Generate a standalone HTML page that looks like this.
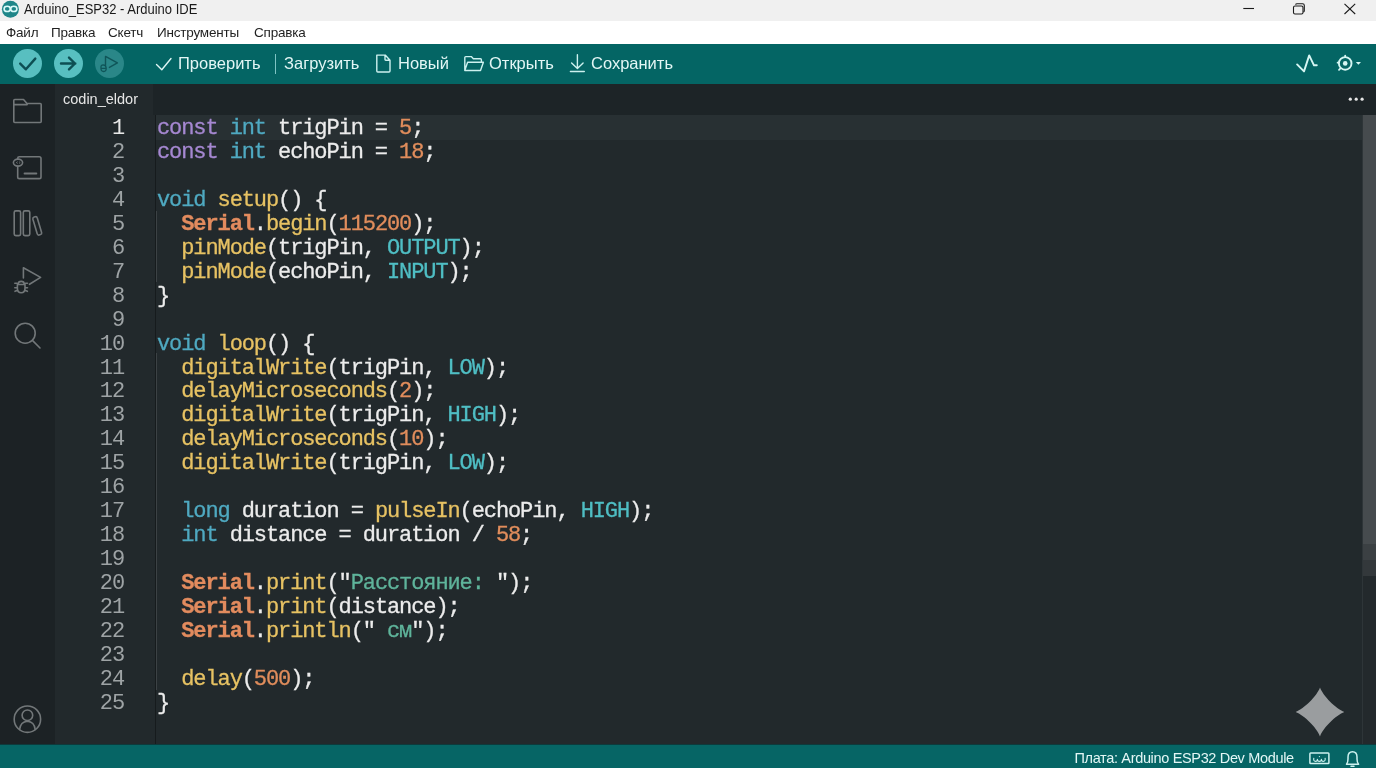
<!DOCTYPE html>
<html><head><meta charset="utf-8">
<style>
*{margin:0;padding:0;box-sizing:border-box}
html,body{width:1376px;height:768px;overflow:hidden;background:#22292c;font-family:"Liberation Sans",sans-serif}
body>div,body>svg{will-change:transform}
.abs{position:absolute}
#title{left:0;top:0;width:1376px;height:21px;background:#f0f0f0}
#title .t{left:23.5px;top:0.8px;font-size:14px;transform:scaleX(0.928);transform-origin:0 0;color:#1a1a1a;white-space:nowrap}
#menu{left:0;top:21px;width:1376px;height:23px;background:#ffffff}
#menu span{position:absolute;top:4px;font-size:13.5px;letter-spacing:-0.2px;color:#1f1f1f;white-space:nowrap}
#tool{left:0;top:44px;width:1376px;height:40px;background:#046564}
.circ{position:absolute;width:29px;height:29px;border-radius:50%;background:#58bfc0;top:5px}
.tb{position:absolute;top:10px;font-size:16.5px;color:#e3f6f5;white-space:nowrap}
#side{left:0;top:84px;width:55px;height:660px;background:#1c2225}
#tabbar{left:55px;top:84px;width:1321px;height:31px;background:#1d2427}
#tab{left:55px;top:84px;width:98px;height:31px;background:#22292c}
#tab span{position:absolute;left:8px;top:6.5px;font-size:14.5px;color:#e6e6e6}
#editor{left:55px;top:115px;width:1321px;height:629px;background:#22292c}
#gutline{left:155px;top:115px;width:1px;height:629px;background:#161b1d}
#hl{left:156px;top:115px;width:1206px;height:25px;background:#283033}
#scroll{left:1362px;top:115px;width:14px;height:629px;background:#23292c;border-left:1px solid #2e3538}
#thumb{left:1363px;top:115px;width:13px;height:429px;background:#464b4e}
#status{left:0;top:744px;width:1376px;height:24px;background:#066565;border-top:1px solid #0d3a3c}
.code{position:absolute;left:156.5px;top:117px;font-family:"Liberation Mono",monospace;font-size:22px;letter-spacing:-1.1px;line-height:23.95px;color:#ececec;-webkit-text-stroke:0.3px currentColor;white-space:pre}
.nums{position:absolute;left:60px;width:64px;top:117px;font-family:"Liberation Mono",monospace;font-size:22px;letter-spacing:-1.1px;line-height:23.95px;color:#9ea3a5;text-align:right;white-space:pre}
.k{color:#a688d2}.ty{color:#4fa9c1}.f{color:#e7c263}.n{color:#e18d5c}.s{color:#e28b5e;font-weight:bold}.c{color:#4fbec4}.st{color:#5fb49b}
</style></head><body>
<div id="title" class="abs">
  <svg class="abs" style="left:0;top:0" width="22" height="20" viewBox="0 0 22 20"><circle cx="10.4" cy="9.15" r="8.5" fill="#1f8689"/><g fill="none" stroke="#dcfbfa" stroke-width="1.6"><ellipse cx="7.2" cy="8.9" rx="3.1" ry="2.6"/><ellipse cx="13.8" cy="8.9" rx="3.1" ry="2.6"/></g></svg>
  <div class="abs t">Arduino_ESP32 - Arduino IDE</div>
  <svg class="abs" style="left:1230px;top:0" width="146" height="20" viewBox="1230 0 146 20" fill="none" stroke="#1a1a1a" stroke-width="1.1">
    <path d="M1243.3 8.5H1254"/>
    <rect x="1293.5" y="6" width="9.5" height="8" rx="1.5"/>
    <path d="M1295.5 4.6Q1295.8 3.8 1297 3.8H1302.6Q1304.3 3.8 1304.3 5.5V10.8Q1304.3 11.8 1303.3 12"/>
    <path d="M1344.5 3.8L1355.2 14M1355.2 3.8L1344.5 14"/>
  </svg>
</div>
<div id="menu" class="abs">
  <span style="left:6px">Файл</span><span style="left:51px">Правка</span><span style="left:108px">Скетч</span><span style="left:157px">Инструменты</span><span style="left:254px">Справка</span>
</div>
<div id="tool" class="abs">
  <div class="circ" style="left:13px"></div>
  <div class="circ" style="left:54px"></div>
  <div class="circ" style="left:95px;background:#2a8788"></div>
  <svg class="abs" style="left:0;top:0" width="1376" height="40" viewBox="0 44 1376 40" fill="none" stroke-linecap="round" stroke-linejoin="round">
    <path d="M20.2 63.6L25.9 69.3L35.3 58.6" stroke="#0d4f53" stroke-width="2.4"/>
    <path d="M61 63.5H75.3M69 57.6L75 63.5L69 69.4" stroke="#0d4f53" stroke-width="2.4"/>
    <path d="M105.5 65.4V56.4L117.4 62.9L109.4 67.4" stroke="#0f5558" stroke-width="1.4"/>
    <path d="M101 68.2Q100.6 64.9 103.2 64.9Q105.8 65 106.2 68Q106.4 71.4 103.6 71.5Q100.9 71.5 101 68.2Z M101.2 68.3H106" stroke="#0f5558" stroke-width="1.3"/>
    <path d="M156.5 64.5L161.8 69.8L171 58.5" stroke="#dff5f4" stroke-width="1.4"/>
    <path d="M376.8 55.1H385.2L390 60.2V71Q390 72 389 72H377.8Q376.8 72 376.8 71Z M385 55.3V59.6Q385 60.3 385.7 60.3H389.8" stroke="#cdf1ef" stroke-width="1.4"/>
    <path d="M464.8 70.5V57.6Q464.8 56.6 465.8 56.6H471.3L473.3 58.7H480.4Q481.4 58.7 481.4 59.7V62.2 M464.8 70.5L467.6 62.3H483.4L480.5 70.5Z" stroke="#cdf1ef" stroke-width="1.4"/>
    <path d="M577.4 54.8V68.4M571.6 63L577.4 68.6L583.1 63M570.4 71.5H584.3" stroke="#cdf1ef" stroke-width="1.4"/>
    <path d="M1297.1 64.4L1304 71.4L1309.2 55.4L1314 65.3H1316.8" stroke="#d6f6f3" stroke-width="1.9"/>
    <circle cx="1345.2" cy="63.4" r="6.3" stroke="#d6f6f3" stroke-width="1.9"/>
    <circle cx="1345.2" cy="63.4" r="2.3" fill="#d6f6f3"/>
    <path d="M1345.2 55.6V56.8M1337.6 62.7H1338.6M1339 69.8L1340.2 68.6" stroke="#d6f6f3" stroke-width="1.8"/>
    <path d="M1355.8 62H1361L1358.4 64.7Z" fill="#d6f6f3" stroke="none"/>
  </svg>
  <div class="tb" style="left:178px">Проверить</div>
  <div class="abs" style="left:275px;top:10px;width:1px;height:20px;background:#7fc4c4"></div>
  <div class="tb" style="left:284px">Загрузить</div>
  <div class="tb" style="left:398px">Новый</div>
  <div class="tb" style="left:489px">Открыть</div>
  <div class="tb" style="left:591px">Сохранить</div>
</div>
<div id="side" class="abs"></div>
<svg class="abs" style="left:0;top:84px" width="55" height="660" viewBox="0 84 55 660" fill="none" stroke="#727779" stroke-width="1.6" stroke-linejoin="round" stroke-linecap="round">
  <path d="M13.8 121.5V100.5Q13.8 99.5 14.8 99.5H23.5L27 103.5H40.2Q41.2 103.5 41.2 104.5V121.5Q41.2 122.5 40.2 122.5H14.8Q13.8 122.5 13.8 121.5Z M13.8 104.6H27.2"/>
  <path d="M17.7 158.9V158.3Q17.7 156.7 19.3 156.7H39.3Q41 156.7 41 158.4V176.9Q41 178.6 39.3 178.6H19.4Q17.7 178.6 17.7 176.9V166.2"/>
  <ellipse cx="18" cy="162.6" rx="4.6" ry="3.5"/>
  <path d="M24.5 173.5H36.4" stroke-width="1.8"/>
  <path d="M16.6 162.6L17.4 161.9M16.6 162.6L17.4 163.3M19.4 161.9L20.2 162.6L19.4 163.3" stroke-width="0.8"/>
  <rect x="14.2" y="210.9" width="6.4" height="24.7" rx="1.6"/>
  <rect x="23.3" y="210.9" width="6.5" height="24.7" rx="1.6"/>
  <path d="M32.9 219.2Q32.5 217.6 34.1 217.1L35.3 216.7Q36.8 216.3 37.2 217.8L41.6 232.6Q42 234.1 40.5 234.6L39.2 235Q37.7 235.4 37.3 233.9Z"/>
  <path d="M23.4 278V267.8L40.6 277.4L29.5 284.3"/>
  <path d="M18.2 283.8Q18.3 281.4 21.2 281.4Q24.1 281.4 24.2 283.8 M17.4 284.5H25V288.2Q25 292.6 21.2 292.8Q17.4 292.6 17.4 288.2Z M14.8 283.3H16.8M14.8 287.8H16.8M15 291.3L16.9 290.5M25.5 283.3H27.5M25.5 287.8H27.5M25.5 290.5L27.4 291.3"/>
  <circle cx="25.2" cy="333.2" r="10" />
  <path d="M32.4 340.4L40 348"/>
  <circle cx="27.4" cy="719.2" r="13.2"/>
  <circle cx="27.4" cy="715.3" r="5.3"/>
  <path d="M19.6 729.5Q20.5 721.8 27.4 721.3Q34.3 721.8 35.2 729.5"/>
</svg>
<div id="tabbar" class="abs"></div>
<div id="tab" class="abs"><span>codin_eldor</span></div>
<svg class="abs" style="left:1340px;top:90px" width="30" height="20" viewBox="1340 90 30 20"><g fill="#e6e6e6"><circle cx="1350.3" cy="99.2" r="1.6"/><circle cx="1356.2" cy="99.2" r="1.6"/><circle cx="1362.1" cy="99.2" r="1.6"/></g></svg>
<div id="editor" class="abs"></div>
<div id="hl" class="abs"></div>
<div id="gutline" class="abs"></div>
<div class="abs" style="left:156px;top:211px;width:1px;height:71px;background:#3c4245"></div>
<div class="abs" style="left:156px;top:353px;width:1px;height:337px;background:#3c4245"></div>
<div id="scroll" class="abs"></div>
<div id="thumb" class="abs"></div>
<div class="abs" style="left:1363px;top:544px;width:13px;height:16px;background:#3b4043"></div>
<div class="abs" style="left:1363px;top:560px;width:13px;height:16px;background:#33383b"></div>
<div class="nums"><span style="color:#e8e8e8">1</span>
2
3
4
5
6
7
8
9
10
11
12
13
14
15
16
17
18
19
20
21
22
23
24
25</div>
<div class="code"><span class="k">const</span> <span class="ty">int</span> trigPin = <span class="n">5</span>;
<span class="k">const</span> <span class="ty">int</span> echoPin = <span class="n">18</span>;

<span class="ty">void</span> <span class="f">setup</span>() {
  <span class="s">Serial</span>.<span class="f">begin</span>(<span class="n">115200</span>);
  <span class="f">pinMode</span>(trigPin, <span class="c">OUTPUT</span>);
  <span class="f">pinMode</span>(echoPin, <span class="c">INPUT</span>);
}

<span class="ty">void</span> <span class="f">loop</span>() {
  <span class="f">digitalWrite</span>(trigPin, <span class="c">LOW</span>);
  <span class="f">delayMicroseconds</span>(<span class="n">2</span>);
  <span class="f">digitalWrite</span>(trigPin, <span class="c">HIGH</span>);
  <span class="f">delayMicroseconds</span>(<span class="n">10</span>);
  <span class="f">digitalWrite</span>(trigPin, <span class="c">LOW</span>);

  <span class="ty">long</span> duration = <span class="f">pulseIn</span>(echoPin, <span class="c">HIGH</span>);
  <span class="ty">int</span> distance = duration / <span class="n">58</span>;

  <span class="s">Serial</span>.<span class="f">print</span>("<span class="st">Расстояние: </span>");
  <span class="s">Serial</span>.<span class="f">print</span>(distance);
  <span class="s">Serial</span>.<span class="f">println</span>("<span class="st"> см</span>");

  <span class="f">delay</span>(<span class="n">500</span>);
}</div>
<svg class="abs" style="left:1290px;top:682px" width="60" height="60" viewBox="1290 682 60 60"><path d="M1320.0 687.6C1323.0 696.0 1336.0 709.0 1344.4 712.0C1336.0 715.0 1323.0 728.0 1320.0 736.4C1317.0 728.0 1304.0 715.0 1295.6 712.0C1304.0 709.0 1317.0 696.0 1320.0 687.6Z" fill="#9a9d9f"/></svg>
<div id="status" class="abs">
  <svg class="abs" style="left:1300px;top:0" width="76" height="24" viewBox="1300 744 76 24" fill="none" stroke="#cdf1ef" stroke-width="1.5" stroke-linejoin="round" stroke-linecap="round">
    <rect x="1309.9" y="752" width="19" height="10.6" rx="0.8"/>
    <path d="M1313.8 757.2Q1313.2 760.4 1315.6 760.4Q1317.4 760.4 1317.4 758.2Q1317.4 760.4 1319.4 760.4Q1321.4 760.4 1321.4 758.2Q1321.4 760.4 1323.3 760.4Q1325.6 760.4 1325.1 757.2" stroke-width="1.1"/>
    <circle cx="1319.4" cy="755.6" r="0.6" fill="#cdf1ef" stroke="none"/>
    <path d="M1346.5 763.2H1358.6Q1357 761.5 1357 758V756Q1357 750.7 1352.5 750.7Q1348 750.7 1348 756V758Q1348 761.5 1346.5 763.2Z M1351 765.2H1354"/>
  </svg>
  <div class="abs" style="left:1074.5px;top:5px;font-size:14.5px;letter-spacing:-0.34px;color:#e3f6f5;white-space:nowrap">Плата: Arduino ESP32 Dev Module</div>
</div>
</body></html>
